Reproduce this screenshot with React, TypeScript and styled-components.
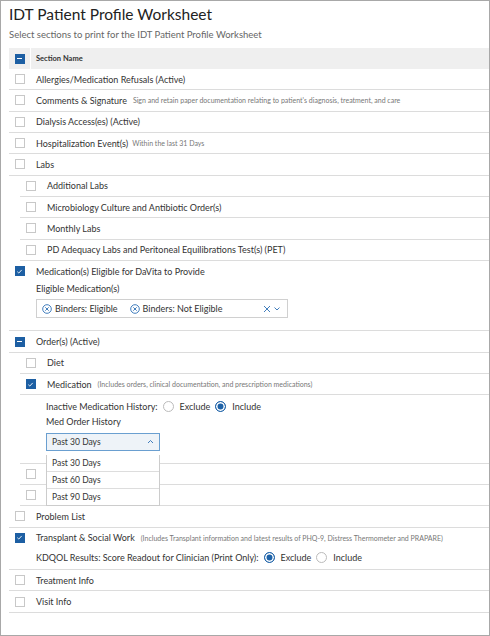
import React from "react";
import styled, { createGlobalStyle } from "styled-components";

const Global = createGlobalStyle`
  html, body { margin: 0; padding: 0; background: #fff; }
  body { font-family: Lato, "Open Sans", sans-serif; color: #333; }
`;

const Frame = styled.div`
  width: 490px; height: 636px; box-sizing: border-box;
  border: 1px solid #a8a8a8; padding: 0 0 0 8px; overflow: hidden; position: relative;
`;
const Title = styled.h1`
  margin: 0; padding-top: 3px; font-size: 15.5px; font-weight: 400; color: #222; line-height: 20px;
`;
const Subtitle = styled.div`
  font-size: 9.5px; color: #666; margin-top: 5px; line-height: 12px; margin-bottom: 7px;
`;
const Header = styled.div`
  display: flex; align-items: center; height: 21px; background: #efefef; font-size: 7.5px; font-weight: 700; color: #333;
`;
const CheckCell = styled.div`
  width: 21px; flex: none; display: flex; justify-content: center;
`;
const HeaderSep = styled.div`
  width: 1px; align-self: stretch; background: #fff; margin-right: 5px;
`;
const Box = styled.div<{ $on?: boolean }>`
  width: 10px; height: 10px; box-sizing: border-box; border: 1px solid ${(p) => (p.$on ? "#1d5fa3" : "#c8c8c8")};
  background: ${(p) => (p.$on ? "#1d5fa3" : "#fff")}; display: flex; align-items: center; justify-content: center;
`;
const Row = styled.div<{ $indent?: boolean; $noBorder?: boolean }>`
  display: flex; align-items: center; height: 20.33px; font-size: 9px; color: #333;
  border-bottom: ${(p) => (p.$noBorder ? "none" : "1px solid #dcdcdc")};
  margin-left: ${(p) => (p.$indent ? 11 : 0)}px;
`;
const Label = styled.span`margin-left: 6px; white-space: nowrap;`;
const Hint = styled.span<{ $gap?: number }>`font-size: 7px; color: #777; margin-left: ${(p) => p.$gap ?? 5}px; white-space: nowrap;`;
const Block = styled.div<{ $indent?: boolean; $h: number }>`
  height: ${(p) => p.$h}px; border-bottom: 1px solid #dcdcdc; box-sizing: border-box; margin-left: ${(p) => (p.$indent ? 11 : 0)}px;
  position: relative;
`;
const Inner = styled.div<{ $left: number }>`padding-left: ${(p) => p.$left}px; font-size: 9px; color: #333;`;
const FieldLabel = styled.div<{ $top: number }>`margin-top: ${(p) => p.$top}px; line-height: 12px;`;
const MultiSelect = styled.div`
  margin-top: 4px; width: 252px; height: 19px; box-sizing: border-box; border: 1px solid #d0d0d0;
  display: flex; align-items: center; padding: 0 6px 0 5px; font-size: 9px;
`;
const Chip = styled.span`display: inline-flex; align-items: center; gap: 3px; margin-right: 12px;`;
const Spacer = styled.div`flex: 1;`;
const RadioLine = styled.div`display: flex; align-items: center; height: 21.5px; font-size: 9px;`;
const Radio = styled.span<{ $on?: boolean }>`
  width: 11px; height: 11px; border-radius: 50%; box-sizing: border-box; display: inline-block;
  border: ${(p) => (p.$on ? "1px solid #1d62a8" : "1px solid #bbb")}; background: ${(p) => (p.$on ? "#1d62a8" : "#fff")};
  box-shadow: ${(p) => (p.$on ? "inset 0 0 0 1.5px #fff" : "none")}; margin: 0 6px 0 5px;
`;
const SelectBox = styled.div`
  margin-top: 5px; width: 114px; height: 18px; box-sizing: border-box; border: 1px solid #6a9fd0; background: #eef3f8;
  display: flex; align-items: center; justify-content: space-between; padding: 0 5px; font-size: 8.5px;
`;
const Menu = styled.div`
  position: absolute; left: 26px; top: 81px; width: 114px; box-sizing: border-box; background: #fff; border: 1px solid #ccc; border-top: none;
  z-index: 5; font-size: 8.5px;
`;
const MenuItem = styled.div<{ $sel?: boolean }>`
  height: 16px; display: flex; align-items: center; padding-left: 5px; border-top: ${(p) => (p.$sel ? "none" : "1px solid #ddd")};
  background: #fff;
`;

const Check = () => (
  <svg width="7" height="7" viewBox="0 0 8 8"><path d="M1.5 4.2 L3.2 5.8 L6.5 2.2" stroke="#fff" strokeWidth="1" fill="none" /></svg>
);
const Dash = () => <div style={{ width: 5, height: 1.3, background: "#fff" }} />;
const CB = ({ on, mixed }: { on?: boolean; mixed?: boolean }) => (
  <Box $on={on || mixed}>{on ? <Check /> : mixed ? <Dash /> : null}</Box>
);
const XCircle = () => (
  <svg width="10" height="10" viewBox="0 0 10 10"><circle cx="5" cy="5" r="4.3" stroke="#2d6fb5" fill="none" strokeWidth="0.9" /><path d="M3.3 3.3 L6.7 6.7 M6.7 3.3 L3.3 6.7" stroke="#2d6fb5" strokeWidth="0.9" /></svg>
);

const R = ({ label, hint, on, mixed, indent, gap }: { label?: string; hint?: string; on?: boolean; mixed?: boolean; indent?: boolean; gap?: number }) => (
  <Row $indent={indent}>
    <CheckCell><CB on={on} mixed={mixed} /></CheckCell>
    {label && <Label>{label}</Label>}
    {hint && <Hint $gap={gap}>{hint}</Hint>}
  </Row>
);

export default function App() {
  return (
    <Frame>
      <Global />
      <Title>IDT Patient Profile Worksheet</Title>
      <Subtitle>Select sections to print for the IDT Patient Profile Worksheet</Subtitle>
      <div>
        <Header>
          <CheckCell><CB mixed /></CheckCell>
          <HeaderSep />
          Section Name
        </Header>
        <R label="Allergies/Medication Refusals (Active)" />
        <R label="Comments & Signature" hint="Sign and retain paper documentation relating to patient's diagnosis, treatment, and care" gap={6} />
        <R label="Dialysis Access(es) (Active)" />
        <R label="Hospitalization Event(s)" hint="Within the last 31 Days" gap={4} />
        <R label="Labs" />
        <R indent label="Additional Labs" />
        <R indent label="Microbiology Culture and Antibiotic Order(s)" />
        <R indent label="Monthly Labs" />
        <R indent label="PD Adequacy Labs and Peritoneal Equilibrations Test(s) (PET)" />
        <Block $h={70.5}>
          <Row $noBorder><CheckCell><CB on /></CheckCell><Label>Medication(s) Eligible for DaVita to Provide</Label></Row>
          <Inner $left={27}>
            <FieldLabel $top={2}>Eligible Medication(s)</FieldLabel>
            <MultiSelect>
              <Chip><XCircle />Binders: Eligible</Chip>
              <Chip><XCircle />Binders: Not Eligible</Chip>
              <Spacer />
              <svg width="18" height="8" viewBox="0 0 18 8"><path d="M1 1 L7 7 M7 1 L1 7" stroke="#2d6fb5" strokeWidth="0.9" /><path d="M11.5 2.5 L14 5 L16.5 2.5" stroke="#2d6fb5" strokeWidth="0.9" fill="none" /></svg>
            </MultiSelect>
          </Inner>
        </Block>
        <R label="Order(s) (Active)" mixed />
        <R indent label="Diet" />
        <Block $indent $h={89.5}>
          <Row><CheckCell><CB on /></CheckCell><Label>Medication</Label><Hint $gap={6}>(Includes orders, clinical documentation, and prescription medications)</Hint></Row>
          <Inner $left={26}>
            <RadioLine>Inactive Medication History:<Radio />Exclude<Radio $on />Include</RadioLine>
            <FieldLabel $top={-1}>Med Order History</FieldLabel>
            <SelectBox>Past 30 Days
              <svg width="7" height="5" viewBox="0 0 7 5"><path d="M1 4 L3.5 1.5 L6 4" stroke="#2d6fb5" strokeWidth="0.9" fill="none" /></svg>
            </SelectBox>
          </Inner>
          <Menu>
            <MenuItem $sel>Past 30 Days</MenuItem>
            <MenuItem>Past 60 Days</MenuItem>
            <MenuItem>Past 90 Days</MenuItem>
          </Menu>
        </Block>
        <R indent />
        <R indent />
        <R label="Problem List" />
        <Block $h={42.5}>
          <Row $noBorder><CheckCell><CB on /></CheckCell><Label>Transplant & Social Work</Label><Hint $gap={6}>(Includes Transplant information and latest results of PHQ-9, Distress Thermometer and PRAPARE)</Hint></Row>
          <Inner $left={27}>
            <RadioLine style={{ marginTop: -1 }}>KDQOL Results: Score Readout for Clinician (Print Only):<Radio $on />Exclude<Radio />Include</RadioLine>
          </Inner>
        </Block>
        <R label="Treatment Info" />
        <R label="Visit Info" />
      </div>
    </Frame>
  );
}
